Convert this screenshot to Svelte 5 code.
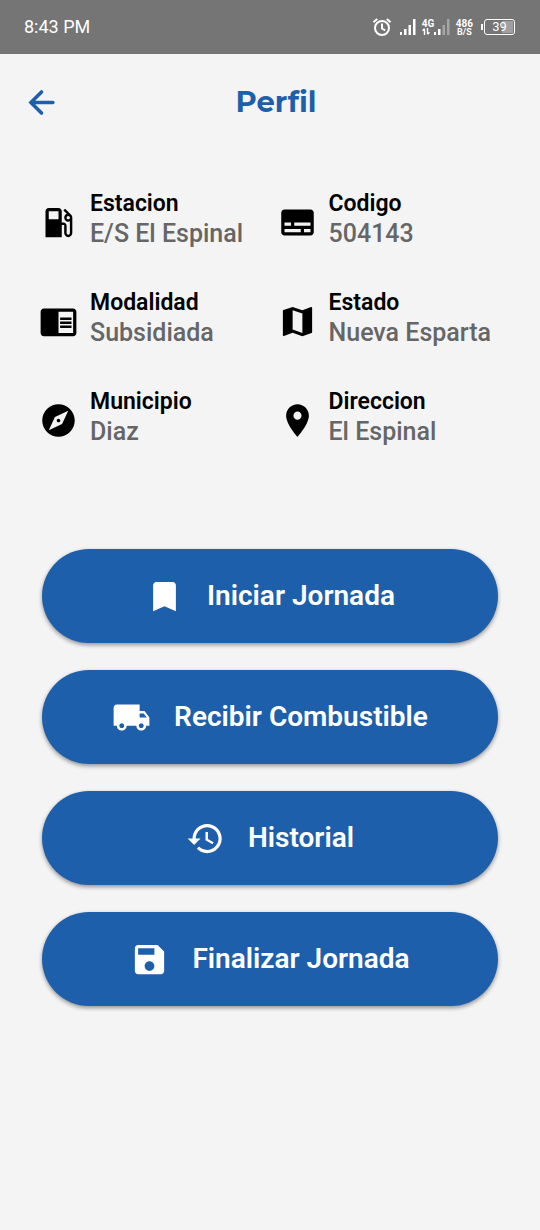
<script>
  const details = [
    { icon: 'station', label: 'Estacion', value: 'E/S El Espinal' },
    { icon: 'code', label: 'Codigo', value: '504143' },
    { icon: 'reader', label: 'Modalidad', value: 'Subsidiada' },
    { icon: 'map', label: 'Estado', value: 'Nueva Esparta' },
    { icon: 'explore', label: 'Municipio', value: 'Diaz' },
    { icon: 'place', label: 'Direccion', value: 'El Espinal' }
  ];

  const actions = [
    { icon: 'bookmark', label: 'Iniciar Jornada' },
    { icon: 'truck', label: 'Recibir Combustible' },
    { icon: 'history', label: 'Historial' },
    { icon: 'save', label: 'Finalizar Jornada' }
  ];

  const paths = {
    station:
      'M19.77 7.23l.01-.01-3.72-3.72L15 4.56l2.11 2.11c-.94.36-1.61 1.26-1.61 2.33 0 1.38 1.12 2.5 2.5 2.5.36 0 .69-.08 1-.21v7.21c0 .55-.45 1-1 1s-1-.45-1-1V14c0-1.1-.9-2-2-2h-1V5c0-1.1-.9-2-2-2H6c-1.1 0-2 .9-2 2v16h10v-7.5h1.5v5c0 1.38 1.12 2.5 2.5 2.5s2.5-1.12 2.5-2.5V9c0-.69-.28-1.32-.73-1.77zM12 10H6V5h6v5zm6 0c-.55 0-1-.45-1-1s.45-1 1-1 1 .45 1 1-.45 1-1 1z',
    code: 'M20 4H4c-1.1 0-2 .9-2 2v12c0 1.1.9 2 2 2h16c1.1 0 2-.9 2-2V6c0-1.1-.9-2-2-2zM4 12h4v2H4v-2zm10 6H4v-2h10v2zm6 0h-4v-2h4v2zm0-4H10v-2h10v2z',
    reader:
      'M13 12h7v1.5h-7zm0-2.5h7V11h-7zm0 5h7V16h-7zM21 4H3c-1.1 0-2 .9-2 2v13c0 1.1.9 2 2 2h18c1.1 0 2-.9 2-2V6c0-1.1-.9-2-2-2zm0 15h-9V6h9v13z',
    map: 'M20.5 3l-.16.03L15 5.1 9 3 3.36 4.9c-.21.07-.36.25-.36.48V20.5c0 .28.22.5.5.5l.16-.03L9 18.9l6 2.1 5.64-1.9c.21-.07.36-.25.36-.48V3.5c0-.28-.22-.5-.5-.5zM15 19l-6-2.11V5l6 2.11V19z',
    explore:
      'M12 10.9c-.61 0-1.1.49-1.1 1.1s.49 1.1 1.1 1.1c.61 0 1.1-.49 1.1-1.1s-.49-1.1-1.1-1.1zM12 2C6.48 2 2 6.48 2 12s4.48 10 10 10 10-4.48 10-10S17.52 2 12 2zm2.19 12.19L6 18l3.81-8.19L18 6l-3.81 8.19z',
    place:
      'M12 2C8.13 2 5 5.13 5 9c0 5.25 7 13 7 13s7-7.75 7-13c0-3.87-3.13-7-7-7zm0 9.5c-1.38 0-2.5-1.12-2.5-2.5s1.12-2.5 2.5-2.5 2.5 1.12 2.5 2.5-1.12 2.5-2.5 2.5z',
    bookmark: 'M17 3H7c-1.1 0-1.99.9-1.99 2L5 21l7-3 7 3V5c0-1.1-.9-2-2-2z',
    truck:
      'M20 8h-3V4H3c-1.1 0-2 .9-2 2v11h2c0 1.66 1.34 3 3 3s3-1.34 3-3h6c0 1.66 1.34 3 3 3s3-1.34 3-3h2v-5l-3-4zM6 18.5c-.83 0-1.5-.67-1.5-1.5s.67-1.5 1.5-1.5 1.5.67 1.5 1.5-.67 1.5-1.5 1.5zm13.5-9l1.96 2.5H17V9.5h2.5zm-1.5 9c-.83 0-1.5-.67-1.5-1.5s.67-1.5 1.5-1.5 1.5.67 1.5 1.5-.67 1.5-1.5 1.5z',
    history:
      'M13 3c-4.97 0-9 4.03-9 9H1l3.89 3.89.07.14L9 12H6c0-3.87 3.13-7 7-7s7 3.13 7 7-3.13 7-7 7c-1.93 0-3.68-.79-4.94-2.06l-1.42 1.42C8.27 19.99 10.51 21 13 21c4.97 0 9-4.03 9-9s-4.03-9-9-9zm-1 5v5l4.28 2.54.72-1.21-3.5-2.08V8H12z',
    save: 'M17 3H5c-1.11 0-2 .9-2 2v14c0 1.1.89 2 2 2h14c1.1 0 2-.9 2-2V7l-4-4zm-5 16c-1.66 0-3-1.34-3-3s1.34-3 3-3 3 1.34 3 3-1.34 3-3 3zm3-10H5V5h10v4z'
  };
</script>

{#snippet icon(name)}
  <svg class="icon" viewBox="0 0 24 24" aria-hidden="true"><path d={paths[name]} /></svg>
{/snippet}

<div class="screen">
  <div class="status">
    <span class="time">8:43 PM</span>
    <div class="indicators">
      <svg class="alarm" viewBox="0 0 20 20" aria-hidden="true">
        <circle cx="10" cy="11" r="7" />
        <path d="M10 6.5v5l3.2 1.8M1.4 5.2 5.2 2M18.6 5.2 14.8 2" />
      </svg>
      <svg class="signal" viewBox="0 0 16 16" aria-hidden="true">
        <path d="M0 13h2v3H0zM4 10h2.500v6H4zM8.500 6H11v10H8.500zM13 0h2.500v16H13z" />
      </svg>
      <div class="mobile">
        <div class="network">
          <span>4G</span>
          <svg class="arrows" viewBox="0 0 8 7" aria-hidden="true">
            <path d="M2.500 7V1M.5 2.800 2.500.6M5.500 0v6M7.500 4.200 5.500 6.400" />
          </svg>
        </div>
        <svg class="signal" viewBox="0 0 16 16" aria-hidden="true">
          <path d="M0 13h2v3H0zM4 10h2.500v6H4z" />
          <path class="faint" d="M8.500 6H11v10H8.500zM13 0h2.500v16H13z" />
        </svg>
      </div>
      <div class="speed"><span>486</span><span class="unit">B/S</span></div>
      <div class="battery"><span>39</span></div>
    </div>
  </div>

  <header>
    <button class="back" aria-label="Volver">
      <svg class="arrow" viewBox="0 0 24 24" aria-hidden="true">
        <path d="M12 5.500 5.500 12 12 18.500M5.500 12H19" />
      </svg>
    </button>
    <h1>Perfil</h1>
  </header>

  <main>
    <dl>
      {#each details as item}
        <div class="detail">
          {@render icon(item.icon)}
          <div class="copy">
            <dt>{item.label}</dt>
            <dd>{item.value}</dd>
          </div>
        </div>
      {/each}
    </dl>

    <div class="actions">
      {#each actions as action}
        <button class="action">
          {@render icon(action.icon)}
          <span>{action.label}</span>
        </button>
      {/each}
    </div>
  </main>
</div>

<style>
  :global(body) {
    margin: 0;
    background: #f4f4f4;
  }

  .screen {
    min-height: 100vh;
    background: #f4f4f4;
    color: #000;
    font-family: Roboto, 'Liberation Sans', sans-serif;
  }

  .status {
    display: flex;
    align-items: center;
    justify-content: space-between;
    height: 54px;
    padding: 0 25px 0 24px;
    background: #757575;
    color: #fff;
  }

  .time {
    font-size: 18px;
    line-height: 24px;
  }

  .indicators {
    display: flex;
    align-items: center;
    gap: 6px;
  }

  .alarm {
    width: 20px;
    height: 20px;
    margin-right: 2px;
    fill: none;
    stroke: #fff;
    stroke-width: 2;
  }

  .signal {
    width: 16px;
    height: 16px;
    fill: #fff;
  }

  .faint {
    opacity: 0.35;
  }

  .mobile {
    display: flex;
    align-items: center;
  }

  .network {
    display: flex;
    flex-direction: column;
    width: 12px;
    font-size: 10px;
    font-weight: 700;
    line-height: 9px;
  }

  .arrows {
    width: 8px;
    height: 7px;
    fill: none;
    stroke: #fff;
    stroke-width: 1.4;
  }

  .speed {
    display: flex;
    flex-direction: column;
    align-items: center;
    padding-top: 2px;
    font-size: 10px;
    font-weight: 700;
    line-height: 9px;
  }

  .unit {
    font-size: 9px;
  }

  .battery {
    position: relative;
    display: flex;
    align-items: center;
    justify-content: center;
    box-sizing: border-box;
    width: 31px;
    height: 16px;
    margin-left: 5px;
    padding: 1px;
    border: 1px solid #fff;
    border-radius: 3px;
    background: linear-gradient(90deg, transparent 60%, #a0a0a0 60%);
    background-clip: content-box;
    font-size: 13px;
    line-height: 14px;
  }

  .battery::before {
    content: '';
    position: absolute;
    left: -4px;
    top: 4px;
    width: 2px;
    height: 6px;
    background: #fff;
  }

  .icon {
    display: block;
    flex: none;
    width: 39px;
    height: 39px;
    fill: currentColor;
  }

  header {
    display: flex;
    align-items: center;
    height: 96px;
    padding: 0 49px 0 22px;
    color: #1e5fac;
  }

  .back {
    padding: 0;
    border: 0;
    background: none;
    color: inherit;
    cursor: pointer;
  }

  .arrow {
    display: block;
    width: 39px;
    height: 39px;
    fill: none;
    stroke: currentColor;
    stroke-width: 2.2;
    stroke-linecap: round;
  }

  h1 {
    flex: 1;
    margin: 0;
    font-family: Montserrat, Inter, 'Open Sans', sans-serif;
    font-size: 29px;
    font-weight: 700;
    line-height: 36px;
    text-align: center;
  }

  main {
    padding: 39px;
  }

  dl {
    display: grid;
    grid-template-columns: 1fr 1fr;
    gap: 40px 15px;
    margin: 0;
  }

  .detail {
    display: flex;
    align-items: center;
    gap: 12px;
  }

  .detail .icon {
    margin-top: 8px;
  }

  .copy {
    min-width: 0;
    white-space: nowrap;
  }

  dt {
    font-size: 23px;
    font-weight: 600;
    line-height: 30px;
  }

  dd {
    margin: 0;
    color: #666;
    font-size: 25px;
    font-weight: 500;
    line-height: 29px;
  }

  .actions {
    display: flex;
    flex-direction: column;
    gap: 27px;
    margin: 103px 3px 0;
  }

  .action {
    display: flex;
    align-items: center;
    justify-content: center;
    gap: 23px;
    height: 94px;
    padding: 0 24px;
    border: 0;
    border-radius: 47px;
    background: #1e5fac;
    box-shadow: 0 2px 4px rgba(0, 0, 0, 0.4);
    color: #fff;
    font-family: inherit;
    font-size: 28px;
    font-weight: 600;
    line-height: 36px;
    cursor: pointer;
  }
</style>
